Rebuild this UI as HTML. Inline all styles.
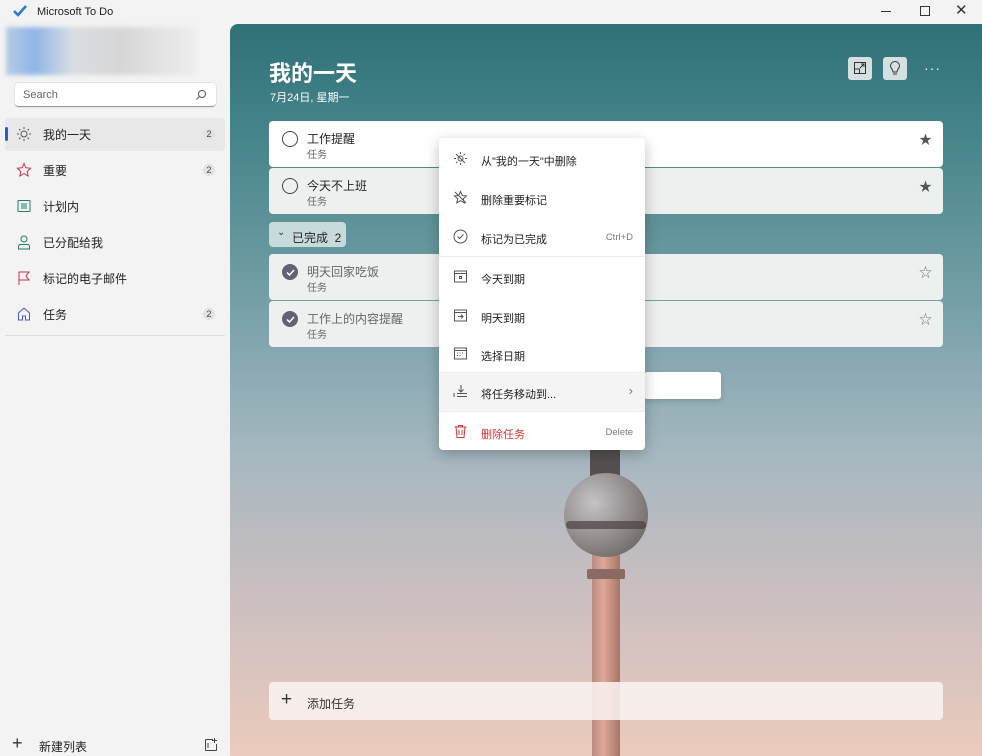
<!DOCTYPE html>
<html><head><meta charset="utf-8"><style>
*{margin:0;padding:0;box-sizing:border-box}
body{width:982px;height:756px;overflow:hidden;background:#f3f3f3;font-family:"Liberation Sans","Noto Sans CJK SC",sans-serif;font-size:12px;color:#222;position:relative}
.abs{position:absolute}
.nav{position:absolute;left:6px;width:219px;height:34px;display:flex;align-items:center;font-size:12px}
.nav .ic{position:absolute;left:10px;top:9px;width:16px;height:16px}
.nav .t{position:absolute;left:37px}
.nav .b{position:absolute;right:10px;width:12px;height:12px;border-radius:6px;background:#e2e2e2;font-size:9px;text-align:center;line-height:12px;color:#444}
.main{position:absolute;left:230px;top:24px;width:752px;height:732px;border-top-left-radius:8px;overflow:hidden;background:linear-gradient(180deg,#2e7177 0%,#45848a 15%,#7aa2aa 40%,#a4b7c0 58%,#cbbfc0 78%,#ebcbbd 100%)}
.task{position:absolute;left:39px;width:674px;height:46px;border-radius:4px;background:#eef0f0}
.task .c{position:absolute;left:13px;top:10px;width:16px;height:16px;border-radius:50%;border:1.5px solid #444}
.task .n{position:absolute;left:38px;top:9px;font-size:12px}
.task .s{position:absolute;left:38px;top:25px;font-size:10px;color:#666}
.task .st{position:absolute;right:11px;top:8px;font-size:13px;color:#555}
.menu{position:absolute;left:439px;top:138px;width:206px;height:312px;background:#fff;border-radius:4px;box-shadow:0 4px 14px rgba(0,0,0,.25)}
.mi{position:absolute;left:0;width:206px;height:38px;font-size:11px}
.mi .t{position:absolute;left:42px;top:13px}
.mi .i{position:absolute;left:14px;top:11px;width:15px;height:15px}
.mi .k{position:absolute;right:12px;top:14px;font-size:9.5px;color:#777}
.sep{position:absolute;left:0;width:206px;height:1px;background:#ececec}
</style></head><body>
<svg class="abs" style="left:13px;top:5px" width="14" height="12" viewBox="0 0 14 12"><path d="M1 6l4 4 8-9" stroke="#2b7cd3" stroke-width="2.6" fill="none"/></svg>
<div class="abs" style="left:37px;top:6px;font-size:11px;color:#222">Microsoft To Do</div>
<div class="abs" style="left:881px;top:11px;width:10px;height:1px;background:#333"></div>
<div class="abs" style="left:920px;top:6px;width:10px;height:10px;border:1px solid #333"></div>
<div class="abs" style="left:955px;top:1px;font-size:15px;color:#333">✕</div>
<div class="abs" style="left:6px;top:27px;width:190px;height:48px;background:linear-gradient(90deg,#b9cbe2 0%,#8eb6e6 15%,#d9dde3 35%,#d6d6d6 60%,#eee 100%);filter:blur(2px)"></div>
<div class="abs" style="left:15px;top:83px;width:201px;height:24px;background:#fff;border-radius:4px;border-bottom:1px solid #999;box-shadow:0 0 0 1px #e4e4e4"></div>
<div class="abs" style="left:23px;top:89px;font-size:11px;color:#666">Search</div>
<svg class="abs" style="left:195px;top:89px" width="12" height="12" viewBox="0 0 12 12"><circle cx="7" cy="5" r="3.5" fill="none" stroke="#555"/><path d="M4.5 7.5L1.5 10.5" stroke="#555"/></svg>
<div class="abs" style="left:5px;top:118px;width:220px;height:33px;background:#e8e8e8;border-radius:4px"></div>
<div class="abs" style="left:5px;top:127px;width:3px;height:14px;background:#2560c7;border-radius:2px"></div>
<div class="nav" style="top:117px"><svg class="ic" viewBox="0 0 16 16"><circle cx="8" cy="8" r="3" fill="none" stroke="#555"/><path d="M8 1v2M8 13v2M1 8h2M13 8h2M3 3l1.4 1.4M11.6 11.6L13 13M3 13l1.4-1.4M11.6 4.4L13 3" stroke="#555"/></svg><span class="t">我的一天</span><span class="b">2</span></div>
<div class="nav" style="top:153px"><svg class="ic" viewBox="0 0 16 16"><path d="M8 1.5l2 4.3 4.6.5-3.4 3.1 1 4.6L8 11.6 3.8 14l1-4.6L1.4 6.3 6 5.8z" fill="none" stroke="#c4314b"/></svg><span class="t">重要</span><span class="b">2</span></div>
<div class="nav" style="top:189px"><svg class="ic" viewBox="0 0 16 16"><rect x="2" y="2.5" width="12" height="11" rx="1" fill="none" stroke="#1e7b6d"/><path d="M6 5v6M8 5v6M10 5v6" stroke="#1e7b6d"/></svg><span class="t">计划内</span></div>
<div class="nav" style="top:225px"><svg class="ic" viewBox="0 0 16 16"><circle cx="8" cy="5" r="3" fill="none" stroke="#1e7b6d"/><path d="M2.5 15v-2.5a2 2 0 0 1 2-2h7a2 2 0 0 1 2 2V15z" fill="none" stroke="#1e7b6d"/></svg><span class="t">已分配给我</span></div>
<div class="nav" style="top:261px"><svg class="ic" viewBox="0 0 16 16"><path d="M3 15V2h10l-3 4 3 4H3" fill="none" stroke="#c4314b"/></svg><span class="t">标记的电子邮件</span></div>
<div class="nav" style="top:297px"><svg class="ic" viewBox="0 0 16 16"><path d="M2.5 14V7L8 2l5.5 5v7h-4v-4h-3v4z" fill="none" stroke="#4a5fc1"/></svg><span class="t">任务</span><span class="b">2</span></div>
<div class="abs" style="left:5px;top:335px;width:220px;height:1px;background:#ddd"></div>
<div class="abs" style="left:12px;top:734px;font-size:18px;line-height:18px;color:#333">+</div>
<div class="abs" style="left:39px;top:738px;font-size:12px">新建列表</div>
<svg class="abs" style="left:204px;top:738px" width="14" height="14" viewBox="0 0 14 14"><path d="M9 1.5H2a.5.5 0 0 0-.5.5v10a.5.5 0 0 0 .5.5h10a.5.5 0 0 0 .5-.5V6M4 5v5M10.5 0v5M8 2.5h5" fill="none" stroke="#444"/></svg>
<div class="main">
 <div class="abs" style="left:373px;top:420px;width:4px;height:30px;background:#3d3e42"></div>
 <div class="abs" style="left:360px;top:426px;width:30px;height:30px;background:#55504f"></div>
 <div class="abs" style="left:362px;top:530px;width:28px;height:202px;background:linear-gradient(90deg,#b98b80,#e0a897 40%,#a57569)"></div>
 <div class="abs" style="left:357px;top:545px;width:38px;height:10px;background:#8a6a63;border-radius:2px"></div>
 <div class="abs" style="left:334px;top:449px;width:84px;height:84px;border-radius:50%;background:radial-gradient(circle at 35% 35%,#c6c4c6,#86807f 60%,#5b5352)"></div>
 <div class="abs" style="left:336px;top:497px;width:80px;height:8px;background:#4a4040;opacity:.7;border-radius:4px"></div>
 <div class="abs" style="left:39px;top:32px;font-size:22px;font-weight:bold;color:#fff">我的一天</div>
 <div class="abs" style="left:40px;top:65px;font-size:11px;color:#fff">7月24日, 星期一</div>
 <div class="abs" style="left:618px;top:33px;width:24px;height:23px;background:#d5e0e0;border-radius:3px"></div>
 <svg class="abs" style="left:624px;top:38px" width="12" height="12" viewBox="0 0 12 12"><rect x=".5" y=".5" width="11" height="11" fill="none" stroke="#333"/><path d="M.5 7h5v4.5M6 6L10 2M7 2h3v3" fill="none" stroke="#333"/></svg>
 <div class="abs" style="left:653px;top:33px;width:24px;height:23px;background:#d5e0e0;border-radius:3px"></div>
 <svg class="abs" style="left:659px;top:37px" width="12" height="15" viewBox="0 0 12 15"><path d="M4 11C4 8 1.5 7.5 1.5 5a4.5 4.5 0 0 1 9 0c0 2.5-2.5 3-2.5 6zM4 13h4" fill="none" stroke="#333"/></svg>
 <div class="abs" style="left:694px;top:36px;font-size:14px;color:#fff;letter-spacing:1px">···</div>
 <div class="task" style="top:97px;background:#fff"><div class="c"></div><div class="n">工作提醒</div><div class="s">任务</div><div class="st">★</div></div>
 <div class="task" style="top:144px"><div class="c"></div><div class="n">今天不上班</div><div class="s">任务</div><div class="st">★</div></div>
 <div class="abs" style="left:39px;top:198px;width:77px;height:25px;background:#c7dbdc;border-radius:4px"></div>
 <div class="abs" style="left:47px;top:203px;font-size:10px;color:#333">⌄</div>
 <div class="abs" style="left:62px;top:205px;font-size:12px;color:#222">已完成&nbsp; 2</div>
 <div class="task" style="top:230px"><div class="c" style="background:#5e6570;border-color:#5e6570"></div><svg class="abs" style="left:17px;top:15px" width="9" height="7"><path d="M1 3.5l2.5 2.5L8 1" stroke="#fff" stroke-width="1.5" fill="none"/></svg><div class="n" style="color:#666">明天回家吃饭</div><div class="s">任务</div><div class="st" style="color:#777">☆</div></div>
 <div class="task" style="top:277px"><div class="c" style="background:#5e6570;border-color:#5e6570"></div><svg class="abs" style="left:17px;top:15px" width="9" height="7"><path d="M1 3.5l2.5 2.5L8 1" stroke="#fff" stroke-width="1.5" fill="none"/></svg><div class="n" style="color:#666">工作上的内容提醒</div><div class="s">任务</div><div class="st" style="color:#777">☆</div></div>
 <div class="abs" style="left:414px;top:348px;width:77px;height:27px;background:#fff;border-radius:3px;box-shadow:0 2px 6px rgba(0,0,0,.15)"></div>
 <div class="abs" style="left:39px;top:658px;width:674px;height:38px;background:rgba(250,245,243,.85);border-radius:4px"></div>
 <div class="abs" style="left:51px;top:665px;font-size:19px;color:#333;font-weight:300">+</div>
 <div class="abs" style="left:77px;top:671px;font-size:12px;color:#333">添加任务</div>
</div>
<div class="menu">
 <div class="mi" style="top:2px"><svg class="i" viewBox="0 0 15 15"><circle cx="7.5" cy="7.5" r="2.5" fill="none" stroke="#555"/><path d="M7.5 1v2M7.5 12v2M1 7.5h2M12 7.5h2M3 3l1.4 1.4M10.6 10.6L12 12M3 12l1.4-1.4M10.6 4.4L12 3M3 3l9 9" stroke="#555"/></svg><span class="t">从"我的一天"中删除</span></div>
 <div class="mi" style="top:41px"><svg class="i" viewBox="0 0 15 15"><path d="M7.5 1.5l1.8 4 4.2.4-3.2 2.8 1 4.2-3.8-2.2-3.8 2.2 1-4.2L1.5 5.9l4.2-.4zM2 2l11 11" fill="none" stroke="#555"/></svg><span class="t">删除重要标记</span></div>
 <div class="mi" style="top:80px"><svg class="i" viewBox="0 0 15 15"><circle cx="7.5" cy="7.5" r="6.5" fill="none" stroke="#555"/><path d="M4.5 7.5l2 2 4-4" fill="none" stroke="#555"/></svg><span class="t">标记为已完成</span><span class="k">Ctrl+D</span></div>
 <div class="sep" style="top:118px"></div>
 <div class="mi" style="top:120px"><svg class="i" viewBox="0 0 15 15"><rect x="1.5" y="2" width="12" height="11" fill="none" stroke="#555"/><path d="M1.5 4.5h12" stroke="#555"/><rect x="6.5" y="7.5" width="2" height="2" fill="none" stroke="#555"/></svg><span class="t">今天到期</span></div>
 <div class="mi" style="top:159px"><svg class="i" viewBox="0 0 15 15"><rect x="1.5" y="2" width="12" height="11" fill="none" stroke="#555"/><path d="M1.5 4.5h12M5 8.5h5M8 6.5l2 2-2 2" fill="none" stroke="#555"/></svg><span class="t">明天到期</span></div>
 <div class="mi" style="top:197px"><svg class="i" viewBox="0 0 15 15"><rect x="1.5" y="2" width="12" height="11" fill="none" stroke="#555"/><path d="M1.5 4.5h12M4 7h1M6.5 7h1M9 7h1M4 9.5h1M6.5 9.5h1" stroke="#555"/></svg><span class="t">选择日期</span></div>
 <div class="sep" style="top:234px"></div>
 <div class="mi" style="top:235px;background:#f4f4f4;height:38px"><svg class="i" viewBox="0 0 15 15"><path d="M8 1v7M5.5 5.5L8 8l2.5-2.5M4 9.5h10M4 12.5h10M1 9v4" fill="none" stroke="#555"/></svg><span class="t">将任务移动到...</span><span class="k" style="font-size:13px;top:10px">›</span></div>
 <div class="sep" style="top:273px"></div>
 <div class="mi" style="top:275px"><svg class="i" viewBox="0 0 15 15"><path d="M1.5 3h12M5.5 3V1.5h4V3M3 3l1 10.5h7L12 3M6 6v5M9 6v5" fill="none" stroke="#d13438"/></svg><span class="t" style="color:#d13438">删除任务</span><span class="k">Delete</span></div>
</div>
</body></html>
